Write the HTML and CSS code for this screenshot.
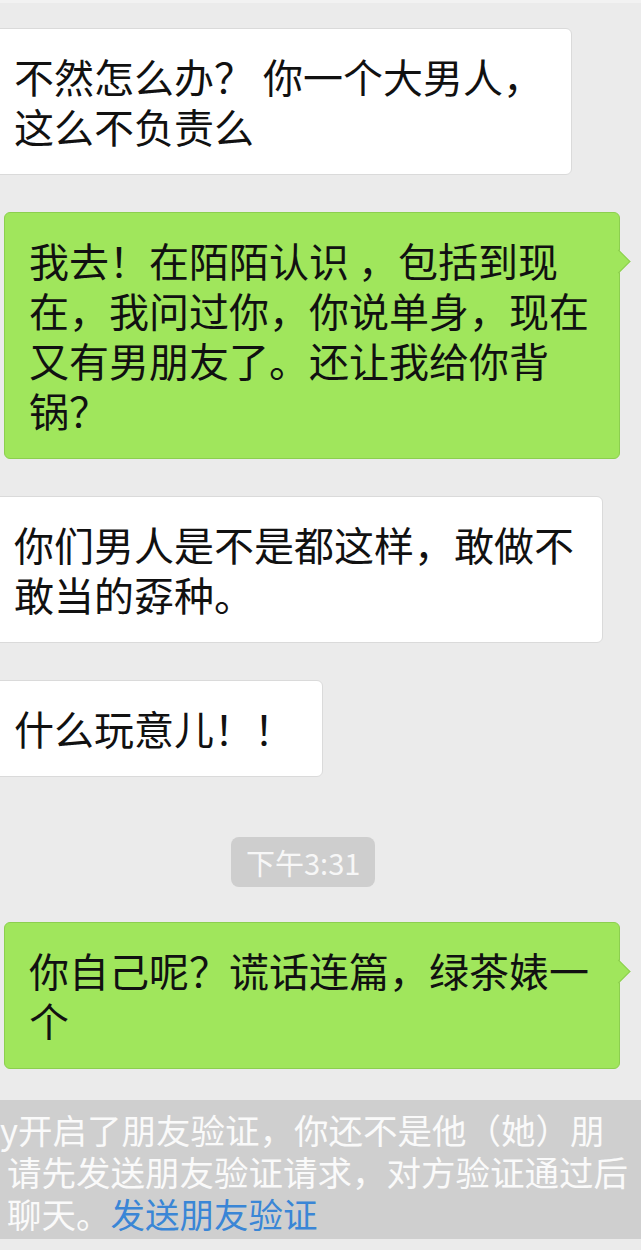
FILE: index.html
```html
<!DOCTYPE html>
<html lang="zh-CN">
<head>
<meta charset="utf-8">
<title>聊天</title>
<link rel="stylesheet" href="styles.css">
</head>
<body>
<div class="chat">
  <div class="row row-left row-first">
    <div class="bubble bubble-in">不然怎么办？ 你一个大男人，<br>这么不负责么</div>
  </div>
  <div class="row row-right">
    <div class="bubble bubble-out">我去！在陌陌认识 ，包括到现<br>在，我问过你，你说单身，现在<br>又有男朋友了。还让我给你背<br>锅？</div>
  </div>
  <div class="row row-left">
    <div class="bubble bubble-in">你们男人是不是都这样，敢做不<br>敢当的孬种。</div>
  </div>
  <div class="row row-left">
    <div class="bubble bubble-in">什么玩意儿！！</div>
  </div>
  <div class="time">下午3:31</div>
  <div class="row row-right row-after-time">
    <div class="bubble bubble-out">你自己呢？谎话连篇，绿茶婊一<br>个</div>
  </div>
  <div class="notice">
    <p class="notice-line notice-first">y开启了朋友验证，你还不是他（她）朋</p>
    <p class="notice-line">请先发送朋友验证请求，对方验证通过后</p>
    <p class="notice-line">聊天。<a class="notice-link">发送朋友验证</a></p>
  </div>
</div>
</body>
</html>
```
FILE: styles.css
```css
* {
  box-sizing: border-box;
}

html, body {
  margin: 0;
  padding: 0;
}

body {
  background: #ebebeb;
  font-family: "Noto Sans CJK SC", "Noto Sans", sans-serif;
  overflow: hidden;
}

.chat {
  display: flex;
  flex-direction: column;
  align-items: stretch;
  height: 1250px;
  overflow: hidden;
  border-top: 3px solid #f2f2f2;
}

.row {
  display: flex;
  flex: none;
  margin-top: 37px;
}

.row-first {
  margin-top: 25px;
}

.row-left {
  justify-content: flex-start;
  margin-left: -10px;
}

.row-right {
  justify-content: flex-end;
  padding-right: 21px;
}

.row-after-time {
  margin-top: 35px;
}

.bubble {
  position: relative;
  font-size: 40px;
  line-height: 50px;
  color: #111;
  border: 1px solid;
  border-radius: 6px;
  white-space: nowrap;
}

.bubble-in {
  background: #ffffff;
  border-color: #dadada;
  padding: 22px 28px 23px 23px;
}

.bubble-out {
  background: #a0e65c;
  border-color: #8ccf4f;
  padding: 22px 30px 23px 24px;
}

.bubble-out::after {
  content: "";
  position: absolute;
  top: 40px;
  right: -8px;
  width: 16px;
  height: 16px;
  background: #a0e65c;
  border-top: 1px solid #8ccf4f;
  border-right: 1px solid #8ccf4f;
  transform: rotate(45deg);
}

.time {
  flex: none;
  align-self: flex-start;
  margin: 60px 0 0 231px;
  padding: 0 15px;
  background: #cecece;
  color: #f7f7f7;
  font-size: 29px;
  line-height: 50px;
  border-radius: 8px;
}

.notice {
  flex: none;
  display: flex;
  flex-direction: column;
  height: 139px;
  margin-top: 31px;
  background: #cfcfcf;
  padding: 8px 0 5px 7px;
  overflow: hidden;
}

.notice-line {
  margin: 0;
  height: 42px;
  font-size: 34.5px;
  line-height: 42px;
  color: #fafafa;
  white-space: nowrap;
}

.notice-first {
  margin-left: -7px;
}

.notice-link {
  color: #3a86d6;
  text-decoration: none;
}
```
